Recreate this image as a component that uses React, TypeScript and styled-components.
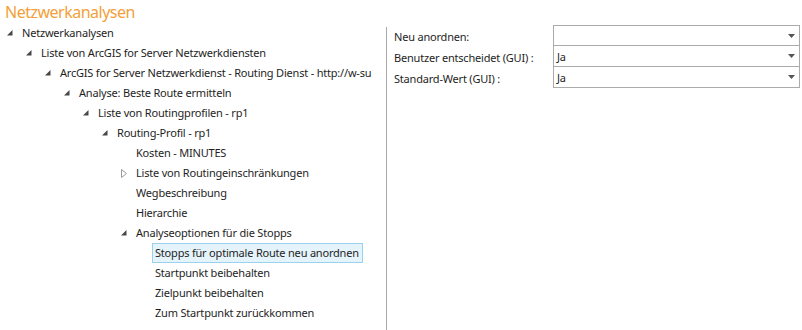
import React from "react";
import styled, { createGlobalStyle } from "styled-components";

const Global = createGlobalStyle`
  html, body { margin: 0; padding: 0; background: #fff; }
  body { font-family: "Noto Sans", "Open Sans", sans-serif; font-size: 11px; letter-spacing: -0.2px; color: #1e1e1e; }
  #root { height: 330px; }
`;

const Page = styled.div`
  display: flex;
  flex-direction: column;
  height: 330px;
  overflow: hidden;
`;

const Title = styled.div`
  height: 23px;
  padding-left: 5px;
  font-size: 16px;
  letter-spacing: -0.5px;
  line-height: 24px;
  color: #f3a03a;
`;

const Content = styled.div`
  flex: 1;
  display: flex;
`;

const Tree = styled.div`
  width: 386px;
  flex-shrink: 0;
  overflow: hidden;
  display: flex;
  flex-direction: column;
`;

const Divider = styled.div`
  width: 1px;
  flex-shrink: 0;
  margin-top: 4px;
  background: #a9a9a9;
`;

const Row = styled.div<{ $level: number }>`
  height: 20px;
  flex-shrink: 0;
  display: flex;
  align-items: center;
  padding-left: ${(p) => 7 + p.$level * 19}px;
  white-space: nowrap;
`;

const Toggle = styled.span`
  width: 15px;
  height: 20px;
  display: flex;
  align-items: center;
  flex-shrink: 0;
`;

const Label = styled.span<{ $selected?: boolean }>`
  margin-left: ${(p) => (p.$selected ? -3 : 0)}px;
  padding: 0 ${(p) => (p.$selected ? 3 : 0)}px 0 ${(p) => (p.$selected ? 2 : 0)}px;
  height: 18px;
  line-height: 18px;
  border: ${(p) => (p.$selected ? "1px solid #99d1ef" : "none")};
  background: ${(p) => (p.$selected ? "#e5f3fb" : "transparent")};
`;

const Panel = styled.div`
  flex: 1;
  padding: 2px 0 0 7px;
  display: grid;
  grid-template-columns: 159px 247px;
  grid-auto-rows: 21px;
  align-content: start;
`;

const FieldLabel = styled.div`
  display: flex;
  align-items: center;
  height: 21px;
  padding-top: 2px;
  box-sizing: border-box;
  white-space: nowrap;
  overflow: hidden;
`;

const Select = styled.div<{ $first?: boolean }>`
  box-sizing: border-box;
  height: 21px;
  border: 1px solid #ababab;
  border-top-width: ${(p) => (p.$first ? 1 : 0)}px;
  display: flex;
  align-items: center;
  justify-content: space-between;
  padding: 0 4px 0 3px;
`;

const ExpandedIcon = () => (
  <svg width="6" height="6" viewBox="0 0 6 6">
    <polygon points="0,5.5 5.5,5.5 5.5,0" fill="#474747" />
  </svg>
);

const CollapsedIcon = () => (
  <svg width="7" height="9" viewBox="0 0 7 9">
    <polygon points="0.5,0.5 5.5,4.5 0.5,8.5" fill="none" stroke="#9a9a9a" strokeWidth="1" />
  </svg>
);

const Caret = () => (
  <svg width="7" height="4" viewBox="0 0 7 4">
    <polygon points="0,0 7,0 3.5,4" fill="#555" />
  </svg>
);

type Node = { level: number; text: string; state: "open" | "closed" | "none"; selected?: boolean };

const nodes: Node[] = [
  { level: 0, text: "Netzwerkanalysen", state: "open" },
  { level: 1, text: "Liste von ArcGIS for Server Netzwerkdiensten", state: "open" },
  { level: 2, text: "ArcGIS for Server Netzwerkdienst - Routing Dienst - http://w-su", state: "open" },
  { level: 3, text: "Analyse: Beste Route ermitteln", state: "open" },
  { level: 4, text: "Liste von Routingprofilen - rp1", state: "open" },
  { level: 5, text: "Routing-Profil - rp1", state: "open" },
  { level: 6, text: "Kosten - MINUTES", state: "none" },
  { level: 6, text: "Liste von Routingeinschränkungen", state: "closed" },
  { level: 6, text: "Wegbeschreibung", state: "none" },
  { level: 6, text: "Hierarchie", state: "none" },
  { level: 6, text: "Analyseoptionen für die Stopps", state: "open" },
  { level: 7, text: "Stopps für optimale Route neu anordnen", state: "none", selected: true },
  { level: 7, text: "Startpunkt beibehalten", state: "none" },
  { level: 7, text: "Zielpunkt beibehalten", state: "none" },
  { level: 7, text: "Zum Startpunkt zurückkommen", state: "none" },
];

const fields = [
  { label: "Neu anordnen:", value: "" },
  { label: "Benutzer entscheidet (GUI) :", value: "Ja" },
  { label: "Standard-Wert (GUI) :", value: "Ja" },
];

export default function App() {
  return (
    <Page>
      <Global />
      <Title>Netzwerkanalysen</Title>
      <Content>
        <Tree>
          {nodes.map((n, i) => (
            <Row key={i} $level={n.level}>
              <Toggle>
                {n.state === "open" && <ExpandedIcon />}
                {n.state === "closed" && <CollapsedIcon />}
              </Toggle>
              <Label $selected={n.selected}>{n.text}</Label>
            </Row>
          ))}
        </Tree>
        <Divider />
        <Panel>
          {fields.map((f, i) => (
            <React.Fragment key={i}>
              <FieldLabel>{f.label}</FieldLabel>
              <Select $first={i === 0}>
                <span>{f.value}</span>
                <Caret />
              </Select>
            </React.Fragment>
          ))}
        </Panel>
      </Content>
    </Page>
  );
}
